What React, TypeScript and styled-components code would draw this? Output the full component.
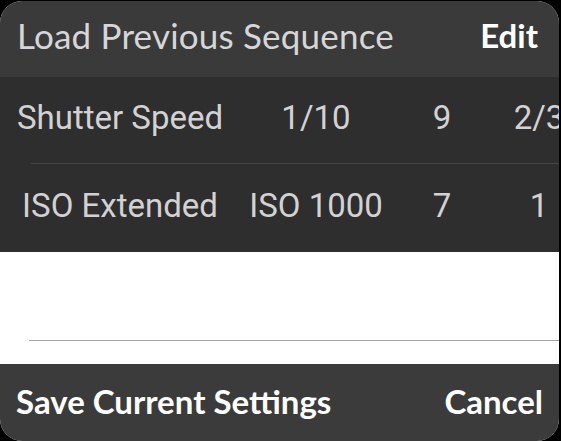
import styled, { createGlobalStyle } from "styled-components";

const GlobalStyle = createGlobalStyle`
  html, body {
    margin: 0;
    padding: 0;
    background: #000;
  }
`;

const Screen = styled.div`
  width: 561px;
  height: 441px;
  background-color: #000;
  padding-top: 1px;
  box-sizing: border-box;
`;

const Sheet = styled.div`
  width: 559px;
  height: 440px;
  border-radius: 22px;
  overflow: hidden;
  display: flex;
  flex-direction: column;
  background-color: #fff;
`;

const Bar = styled.div<{ $height: number; $bg: string; $pad: string }>`
  height: ${(p) => p.$height}px;
  background-color: ${(p) => p.$bg};
  display: flex;
  align-items: center;
  justify-content: space-between;
  padding: ${(p) => p.$pad};
  box-sizing: border-box;
  flex-shrink: 0;
`;

const Title = styled.div`
  font-family: Lato, "Open Sans", sans-serif;
  font-size: 35px;
  color: #d6d6d6;
  letter-spacing: 0.2px;
`;

const Action = styled.div`
  font-family: Lato, "Open Sans", sans-serif;
  font-weight: 700;
  font-size: 33px;
  color: #fff;
`;

const Table = styled.div`
  background-color: #2e2e2e;
  flex-shrink: 0;
`;

const Row = styled.div<{ $divider: boolean }>`
  height: ${(p) => (p.$divider ? 87 : 88)}px;
  display: grid;
  grid-template-columns: 240px 152px 100px 94px;
  align-items: center;
  padding-bottom: 6px;
  box-sizing: border-box;
  position: relative;

  &::after {
    content: "";
    display: ${(p) => (p.$divider ? "block" : "none")};
    position: absolute;
    left: 31px;
    right: 0;
    bottom: 0;
    height: 1px;
    background-color: #454545;
  }
`;

const Cell = styled.div`
  font-family: Roboto, "Liberation Sans", sans-serif;
  font-size: 33px;
  color: #d2d2d2;
  text-align: center;
  white-space: nowrap;
`;

const Blank = styled.div`
  height: 112px;
  background-color: #fff;
  display: flex;
  flex-direction: column;
  justify-content: flex-end;
  padding-bottom: 23px;
  box-sizing: border-box;
`;

const Line = styled.div`
  height: 1px;
  margin-left: 29px;
  background-color: #a3a3a3;
`;

const rows = [
  ["Shutter Speed", "1/10", "9", "2/3"],
  ["ISO Extended", "ISO 1000", "7", "1"],
];

export default function App() {
  return (
    <Screen>
      <GlobalStyle />
      <Sheet>
        <Bar $height={76} $bg="#3a3a3a" $pad="0 21px 9px 17px">
          <Title>Load Previous Sequence</Title>
          <Action>Edit</Action>
        </Bar>
        <Table>
          {rows.map((r, i) => (
            <Row key={i} $divider={i === 0}>
              {r.map((c, j) => (
                <Cell key={j}>{c}</Cell>
              ))}
            </Row>
          ))}
        </Table>
        <Blank>
          <Line />
        </Blank>
        <Bar $height={77} $bg="#3b3b3b" $pad="0 16px 3px 16px">
          <Action>Save Current Settings</Action>
          <Action>Cancel</Action>
        </Bar>
      </Sheet>
    </Screen>
  );
}
